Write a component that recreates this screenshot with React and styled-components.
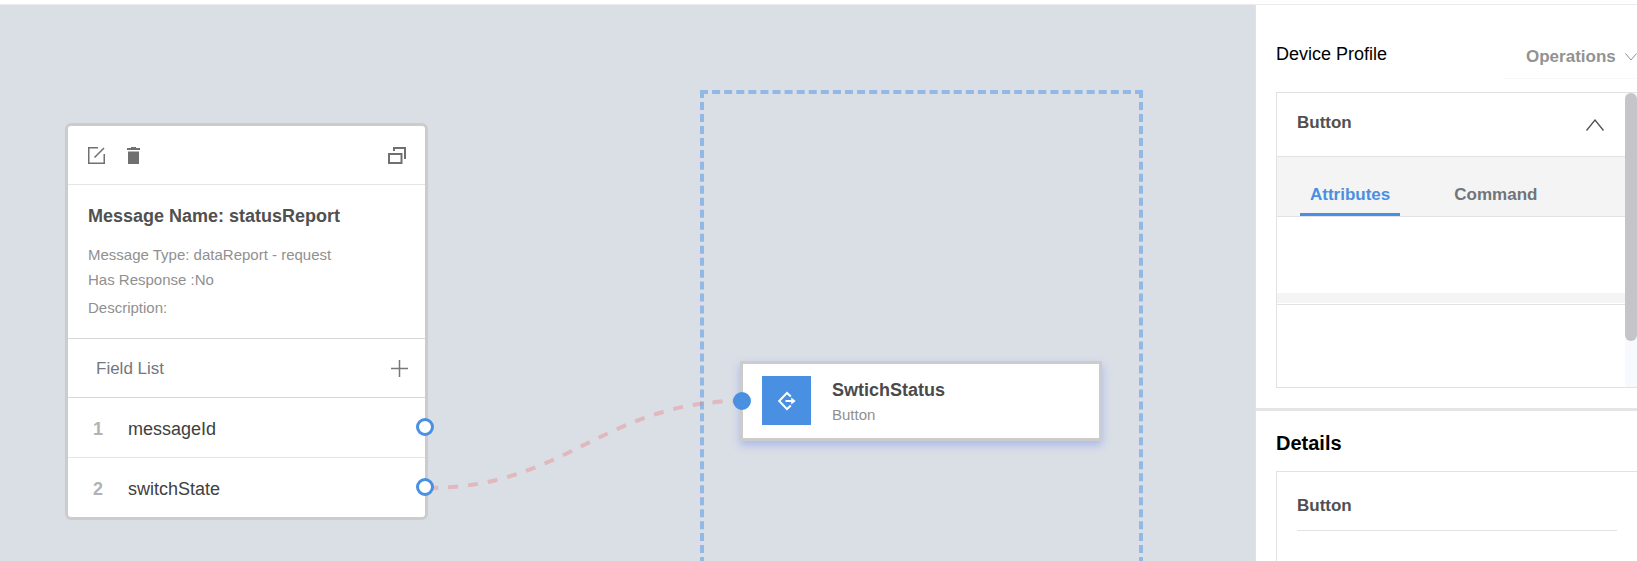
import React, { useState } from "react";
import styled, { createGlobalStyle } from "styled-components";

const GlobalStyle = createGlobalStyle`
  * { box-sizing: border-box; }
  body {
    margin: 0;
    background: #fff;
    font-family: "Liberation Sans", Arial, sans-serif;
    font-size: 17px;
    line-height: 20px;
    color: #4a4a4a;
  }
  h2, h3, p, ol { margin: 0; padding: 0; }
  button, select {
    margin: 0;
    padding: 0;
    border: 0;
    background: none;
    font: inherit;
    color: inherit;
    cursor: pointer;
  }
  svg { display: block; }
`;

const Page = styled.div`
  display: flex;
  flex-direction: column;
  min-height: 100vh;
`;

const TopStrip = styled.header`
  height: 5px;
  border-bottom: 1px solid #ebebeb;
`;

const Workspace = styled.div`
  flex: 1;
  display: grid;
  grid-template-columns: minmax(0, 1fr) 382px;
`;

const Canvas = styled.main`
  position: relative;
  overflow: hidden;
  background: #dadee5;
`;

const DropZone = styled.section`
  position: absolute;
  left: 700px;
  top: 85px;
  bottom: -40px;
  width: 443px;
  border: 4px dashed #92b8e6;
`;

const Wire = styled.svg`
  position: absolute;
  left: 425px;
  top: 390px;
  pointer-events: none;
`;

const MessageCard = styled.article`
  position: absolute;
  left: 65px;
  top: 118px;
  width: 363px;
  border: 3px solid #ccc;
  border-radius: 6px;
  background: #fff;
`;

const CardToolbar = styled.div`
  display: flex;
  align-items: center;
  gap: 22px;
  height: 59px;
  padding: 0 19px 0 20px;
  border-bottom: 1px solid #e5e5e5;
  color: #707070;

  button:last-child { margin-left: auto; }
`;

const CardInfo = styled.div`
  display: flex;
  flex-direction: column;
  height: 154px;
  padding: 21px 20px;
  border-bottom: 1px solid #d8d8d8;
  color: #909090;
  font-size: 15px;
  line-height: 25px;
`;

const CardTitle = styled.h2`
  margin-bottom: 16px;
  font-size: 18px;
  line-height: 20px;
  color: #505050;
`;

const Description = styled.p`
  margin-top: 3px;
`;

const FieldHeader = styled.div`
  display: flex;
  align-items: center;
  justify-content: space-between;
  height: 59px;
  padding: 0 17px 0 28px;
  border-bottom: 1px solid #d8d8d8;
  color: #73787d;

  span { padding-top: 2px; }
`;

const FieldRows = styled.ol`
  list-style: none;
`;

const FieldRow = styled.li`
  position: relative;
  display: flex;
  align-items: center;
  height: 59px;
  padding: 2px 0 0 25px;
  font-size: 18px;
  color: #404040;

  & + & {
    height: 60px;
    border-top: 1px solid #e5e5e5;
  }
`;

const FieldIndex = styled.span`
  width: 35px;
  font-weight: 700;
  color: #b2b2b2;
`;

const Port = styled.span`
  position: absolute;
  top: ${(p) => (p.$side === "left" ? "28px" : "20px")};
  ${(p) => (p.$side === "left" ? "left: -10px" : "right: -9px")};
  width: 18px;
  height: 18px;
  border: 3px solid #4a90e2;
  border-radius: 50%;
  background: ${(p) => (p.$filled ? "#4a90e2" : "#fff")};
`;

const DeviceNode = styled.article`
  position: absolute;
  left: 740px;
  top: 356px;
  display: flex;
  align-items: flex-start;
  gap: 21px;
  width: 362px;
  height: 80px;
  padding: 12px 19px;
  border: 3px solid #ccc;
  background: #fff;
  box-shadow: 0 4px 8px #a8b9ec;
`;

const NodeIcon = styled.div`
  display: grid;
  place-items: center;
  width: 49px;
  height: 49px;
  background: #4a90e2;
`;

const NodeText = styled.div`
  display: flex;
  flex-direction: column;
  gap: 5px;
  padding-top: 4px;
`;

const NodeName = styled.h3`
  font-size: 18px;
  line-height: 20px;
`;

const NodeKind = styled.p`
  font-size: 15px;
  color: #909090;
`;

const Sidebar = styled.aside`
  display: flex;
  flex-direction: column;
  border-left: 1px solid #e2e2e4;
  background: #fff;
`;

const ProfileSection = styled.section`
  padding: 30px 0 20px 20px;
  border-bottom: 3px solid #e5e5e5;
`;

const SectionBar = styled.div`
  display: flex;
  justify-content: space-between;
  align-items: flex-start;
  height: 57px;
`;

const SectionTitle = styled.h2`
  padding-top: 9px;
  font-size: ${(p) => (p.$strong ? "20px" : "18px")};
  font-weight: ${(p) => (p.$strong ? 700 : 400)};
  color: #000;
`;

const OperationsBox = styled.label`
  display: flex;
  align-items: center;
  width: 134px;
  height: 44px;
  border-bottom: 1px solid #f8f8f8;
`;

const OperationsSelect = styled.select`
  appearance: none;
  flex: 1;
  min-width: 0;
  padding: 0 0 0 23px;
  font-weight: 700;
  color: #929292;
`;

const Panel = styled.div`
  display: grid;
  grid-template-columns: minmax(0, 1fr) 12px;
  border: 1px solid #e2e2e4;
  border-right: 0;
`;

const PanelBody = styled.div`
  display: flex;
  flex-direction: column;
`;

const PanelHeader = styled.button`
  display: flex;
  align-items: center;
  justify-content: space-between;
  height: 63px;
  padding: 0 21px 0 20px;
  font-weight: 700;
  color: #505050;

  span { padding-bottom: 3px; }
`;

const Tabs = styled.div`
  display: flex;
  align-items: flex-end;
  gap: 44px;
  height: 61px;
  padding-left: 23px;
  border: solid #e2e2e4;
  border-width: 1px 0;
  background: #f4f4f4;
`;

const Tab = styled.button`
  height: 42px;
  padding: 3px 10px 0;
  border-bottom: 3px solid ${(p) => (p.$active ? "#4a90e2" : "transparent")};
  font-weight: 700;
  color: ${(p) => (p.$active ? "#4a90e2" : "#70757a")};
`;

const TabContent = styled.div`
  height: 86px;
  margin-bottom: 1px;
  border-bottom: 10px solid #f4f4f4;
`;

const EmptyArea = styled.div`
  height: 83px;
  border-top: 1px solid #e2e2e4;
`;

const ScrollTrack = styled.div`
  background: #f8f9fe;
`;

const ScrollThumb = styled.div`
  height: 248px;
  border-radius: 6px;
  background: #c5c5c9;
`;

const DetailsSection = styled.section`
  flex: 1;
  display: flex;
  flex-direction: column;
  padding: 13px 0 0 20px;
`;

const DetailsPanel = styled.div`
  flex: 1;
  margin-top: 18px;
  padding: 0 20px;
  border: solid #e2e2e4;
  border-width: 1px 0 0 1px;
`;

const DetailsHeading = styled.h3`
  height: 59px;
  padding-top: 24px;
  border-bottom: 1px solid #e2e2e4;
  font-size: 17px;
  color: #505050;
`;

const EditIcon = () => (
  <svg width="17" height="17" viewBox="0 0 17 17" fill="none" stroke="currentColor" strokeWidth="1.5">
    <path d="M10 .75H.75V16.25H16.25V7M6.5 10.5 16 1" />
  </svg>
);

const TrashIcon = () => (
  <svg width="13" height="17" viewBox="0 0 13 17" fill="currentColor">
    <path d="M4 0H9V1H13V3H0V1H4ZM1 4.5H12V17H1Z" />
  </svg>
);

const CopyIcon = () => (
  <svg width="18" height="17" viewBox="0 0 18 17" fill="none" stroke="currentColor" strokeWidth="2">
    <path d="M1 7H13.5V16H1ZM6 4V1H17V11H16" />
  </svg>
);

const PlusIcon = () => (
  <svg width="17" height="17" viewBox="0 0 17 17" fill="none" stroke="currentColor" strokeWidth="1.5">
    <path d="M8.5 0V17M0 8.5H17" />
  </svg>
);

const SwitchIcon = () => (
  <svg width="20" height="20" viewBox="0 0 20 20" fill="none" stroke="#fff" strokeWidth="2">
    <path d="M13.8 5.4 10 1.9 2.2 10 10 18.1 13.8 14.6M8.5 10H15" />
    <path d="M14.2 6.4 18.7 10 14.2 13.6Z" fill="#fff" stroke="none" />
  </svg>
);

const Chevron = ({ width, height, up, thin }) => (
  <svg width={width} height={height} viewBox={`0 0 ${width} ${height}`} fill="none" stroke="currentColor" strokeWidth={thin ? 1 : 1.3}>
    <path d={up ? `M.5 ${height - 0.5} ${width / 2} 1 ${width - 0.5} ${height - 0.5}` : `M.5 .5 ${width / 2} ${height - 1} ${width - 0.5} .5`} />
  </svg>
);

const ChevronSlot = styled.span`
  color: #929292;
`;

const fields = ["messageId", "switchState"];
const tabs = ["Attributes", "Command"];

export default function App() {
  const [tab, setTab] = useState("Attributes");
  return (
    <>
      <GlobalStyle />
      <Page>
        <TopStrip />
        <Workspace>
          <Canvas>
            <DropZone />
            <Wire width="320" height="100" fill="none">
              <path d="M3 93C141 93 179 6 317 6" stroke="#e97f81" strokeOpacity="0.4" strokeWidth="4" strokeDasharray="10 10" />
            </Wire>
            <MessageCard>
              <CardToolbar>
                <button type="button" aria-label="Edit message"><EditIcon /></button>
                <button type="button" aria-label="Delete message"><TrashIcon /></button>
                <button type="button" aria-label="Duplicate message"><CopyIcon /></button>
              </CardToolbar>
              <CardInfo>
                <CardTitle>Message Name: statusReport</CardTitle>
                <p>Message Type: dataReport - request</p>
                <p>Has Response :No</p>
                <Description>Description:</Description>
              </CardInfo>
              <FieldHeader>
                <span>Field List</span>
                <button type="button" aria-label="Add field"><PlusIcon /></button>
              </FieldHeader>
              <FieldRows>
                {fields.map((name, i) => (
                  <FieldRow key={name}>
                    <FieldIndex>{i + 1}</FieldIndex>
                    <span>{name}</span>
                    <Port $side="right" />
                  </FieldRow>
                ))}
              </FieldRows>
            </MessageCard>
            <DeviceNode>
              <Port $side="left" $filled />
              <NodeIcon><SwitchIcon /></NodeIcon>
              <NodeText>
                <NodeName>SwtichStatus</NodeName>
                <NodeKind>Button</NodeKind>
              </NodeText>
            </DeviceNode>
          </Canvas>
          <Sidebar>
            <ProfileSection>
              <SectionBar>
                <SectionTitle>Device Profile</SectionTitle>
                <OperationsBox>
                  <OperationsSelect aria-label="Operations" defaultValue="Operations">
                    <option>Operations</option>
                  </OperationsSelect>
                  <ChevronSlot><Chevron width={12} height={8} thin /></ChevronSlot>
                </OperationsBox>
              </SectionBar>
              <Panel>
                <PanelBody>
                  <PanelHeader type="button" aria-expanded="true">
                    <span>Button</span>
                    <Chevron width={18} height={12} up />
                  </PanelHeader>
                  <Tabs role="tablist">
                    {tabs.map((name) => (
                      <Tab key={name} type="button" role="tab" aria-selected={tab === name} $active={tab === name} onClick={() => setTab(name)}>
                        {name}
                      </Tab>
                    ))}
                  </Tabs>
                  <TabContent role="tabpanel" />
                  <EmptyArea />
                </PanelBody>
                <ScrollTrack><ScrollThumb /></ScrollTrack>
              </Panel>
            </ProfileSection>
            <DetailsSection>
              <SectionTitle $strong>Details</SectionTitle>
              <DetailsPanel>
                <DetailsHeading>Button</DetailsHeading>
              </DetailsPanel>
            </DetailsSection>
          </Sidebar>
        </Workspace>
      </Page>
    </>
  );
}
